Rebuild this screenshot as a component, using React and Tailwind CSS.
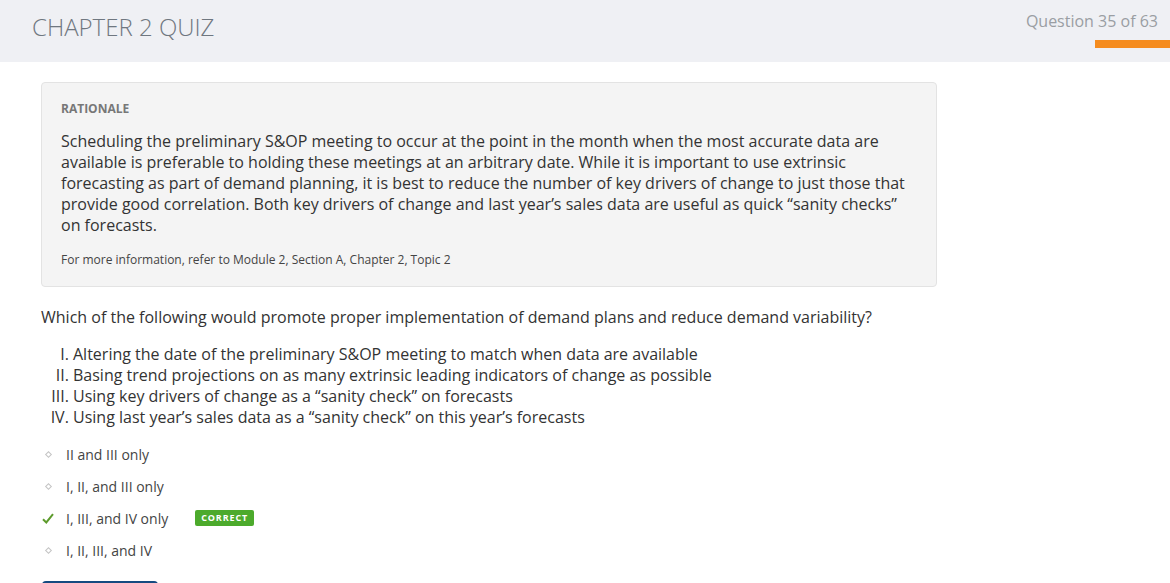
import { useState } from "react";

const statements = [
  "Altering the date of the preliminary S&OP meeting to match when data are available",
  "Basing trend projections on as many extrinsic leading indicators of change as possible",
  "Using key drivers of change as a \u201csanity check\u201d on forecasts",
  "Using last year\u2019s sales data as a \u201csanity check\u201d on this year\u2019s forecasts",
];

const options = [
  { id: "a", label: "II and III only" },
  { id: "b", label: "I, II, and III only" },
  { id: "c", label: "I, III, and IV only", correct: true },
  { id: "d", label: "I, II, III, and IV" },
];

export default function App() {
  const [current] = useState(35);
  const total = 63;

  return (
    <div className="min-h-screen bg-white text-[#333] font-['Open_Sans',sans-serif]">
      {/* --- HEADER --- */}
      <div className="h-[62px] bg-[#eff0f4] flex justify-between">
        <h1 className="pl-[32px] pt-[11px] text-[24px] leading-[32px] font-light text-[#6f7780]">
          CHAPTER 2 QUIZ
        </h1>
        <div className="flex flex-col items-end">
          <span className="pr-[12px] pt-[10px] text-[16px] leading-[22px] text-[#9a9ea3]">
            Question {current} of {total}
          </span>
          <div className="mt-[8px] h-[8px] w-[75px] bg-[#f58c1f]" />
        </div>
      </div>

      <div className="pl-[41px] pt-[20px]">
        {/* --- RATIONALE --- */}
        <div className="w-[896px] bg-[#f4f4f4] border border-[#e3e3e3] rounded-[4px] px-[19px] pt-[18px] pb-[18px]">
          <div className="text-[12px] leading-[16px] font-bold text-[#777]">
            RATIONALE
          </div>
          <p className="mt-[14px] text-[16px] leading-[21px] text-[#333]">
            Scheduling the preliminary S&amp;OP meeting to occur at the point in the month when the most accurate data are
            available is preferable to holding these meetings at an arbitrary date. While it is important to use extrinsic
            forecasting as part of demand planning, it is best to reduce the number of key drivers of change to just those that
            provide good correlation. Both key drivers of change and last year’s sales data are useful as quick “sanity checks”
            on forecasts.
          </p>
          <p className="mt-[16px] text-[12px] leading-[16px] text-[#444]">
            For more information, refer to Module 2, Section A, Chapter 2, Topic 2
          </p>
        </div>

        {/* --- QUESTION --- */}
        <p className="mt-[20px] text-[16px] leading-[21px] text-[#333]">
          Which of the following would promote proper implementation of demand plans and reduce demand variability?
        </p>
        <ol className="mt-[16px] list-[upper-roman] pl-[32px] text-[16px] leading-[21px] text-[#333]">
          {statements.map((s) => (
            <li key={s}>{s}</li>
          ))}
        </ol>

        {/* --- OPTIONS --- */}
        <div className="mt-[10px]">
          {options.map((o) => (
            <div key={o.id} className="h-[32px] flex items-center text-[14px] text-[#444]">
              <div className="w-[25px] flex items-center pl-[1px]">
                {o.correct ? (
                  <svg width="12" height="11" viewBox="0 0 12 11">
                    <path d="M1 6.2 L4.3 9.5 L11 1.2" fill="none" stroke="#5d9b2c" strokeWidth="2" />
                  </svg>
                ) : (
                  <span className="ml-[4px] block w-[5px] h-[5px] rotate-45 border border-[#c4c4c4]" />
                )}
              </div>
              <span>{o.label}</span>
              <span className="w-[27px]" />
              {o.correct && (
                <span className="h-[16px] w-[59px] flex items-center justify-center rounded-[2px] bg-[#4caa2c] text-white text-[9px] font-bold tracking-[0.1em]">
                  CORRECT
                </span>
              )}
            </div>
          ))}
        </div>

        <button className="mt-[15px] w-[116px] h-[38px] ml-[1px] rounded-[4px] bg-[#1f5d99] border-t-2 border-[#154a80]" />
      </div>
    </div>
  );
}
